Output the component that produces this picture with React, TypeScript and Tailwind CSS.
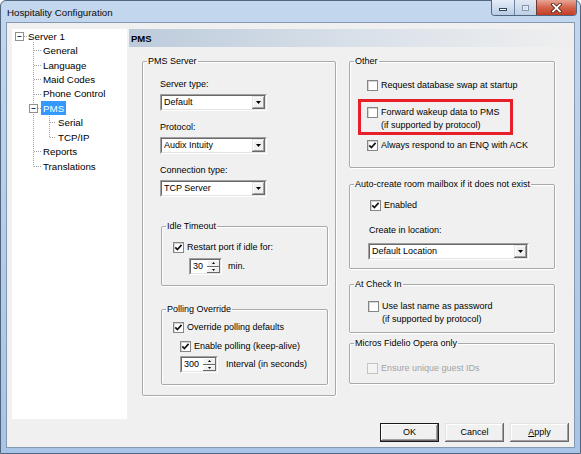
import type { ReactNode } from 'react';

function CheckBox({ checked = false, disabled = false }: { checked?: boolean; disabled?: boolean }) {
    return (
        <span
            className={`mt-px flex h-[11px] w-[11px] shrink-0 items-center justify-center border ${
                disabled ? 'border-[#c4c4c4] bg-[#f4f4f4]' : 'border-[#858585] bg-white shadow-[inset_1px_1px_0_#d4d4d4]'
            }`}
        >
            {checked && (
                <svg width="9" height="9" viewBox="0 0 9 9">
                    <path d="M1.3 4.3 L3.4 6.5 L7.6 1.9" fill="none" stroke="#141414" strokeWidth="1.7" />
                </svg>
            )}
        </span>
    );
}

function CheckRow({
    checked,
    disabled,
    className = '',
    children,
}: {
    checked?: boolean;
    disabled?: boolean;
    className?: string;
    children: ReactNode;
}) {
    return (
        <div className={`flex gap-[3px] ${disabled ? 'text-[#a3a3a3]' : ''} ${className}`}>
            <CheckBox checked={checked} disabled={disabled} />
            <div>{children}</div>
        </div>
    );
}

function GroupBox({ title, className = '', children }: { title: string; className?: string; children: ReactNode }) {
    return (
        <fieldset className={`rounded-[2px] border border-[#a9a9a9] shadow-[inset_1px_1px_0_#ffffff,1px_1px_0_#ffffff] ${className}`}>
            <legend className="ml-[4px] px-[1px]">{title}</legend>
            {children}
        </fieldset>
    );
}

function DownArrow() {
    return (
        <svg width="5" height="3" viewBox="0 0 5 3">
            <path d="M0 0 H5 L2.5 3 Z" fill="#000" />
        </svg>
    );
}

function Combo({ value, className = '' }: { value: string; className?: string }) {
    return (
        <div className={`flex h-[17px] border border-t-[#a0a0a0] border-l-[#a0a0a0] border-r-white border-b-white ${className}`}>
            <div className="flex flex-1 items-center border border-t-[#696969] border-l-[#696969] border-r-[#e3e3e3] border-b-[#e3e3e3] bg-white">
                <span className="flex-1 truncate pl-[2px]">{value}</span>
                <span className="flex h-full w-[13px] items-center justify-center bg-[#f0f0f0] shadow-[inset_-1px_-1px_0_#696969,inset_1px_1px_0_#e3e3e3,inset_-2px_-2px_0_#a0a0a0,inset_2px_2px_0_#ffffff]">
                    <DownArrow />
                </span>
            </div>
        </div>
    );
}

function Spinner({ value, className = '' }: { value: string; className?: string }) {
    return (
        <div className={`flex h-[17px] border border-t-[#a0a0a0] border-l-[#a0a0a0] border-r-white border-b-white ${className}`}>
            <div className="flex flex-1 items-center border border-t-[#696969] border-l-[#696969] border-r-[#e3e3e3] border-b-[#e3e3e3] bg-white">
                <span className="flex-1 pl-[2px]">{value}</span>
                <span className="flex h-full w-[13px] flex-col">
                    <span className="flex flex-1 items-center justify-center bg-[#f0f0f0] shadow-[inset_-1px_-1px_0_#696969,inset_1px_1px_0_#ffffff]">
                        <svg width="3" height="2" viewBox="0 0 3 2">
                            <path d="M0 2 H3 L1.5 0 Z" fill="#000" />
                        </svg>
                    </span>
                    <span className="flex flex-1 items-center justify-center bg-[#f0f0f0] shadow-[inset_-1px_-1px_0_#696969,inset_1px_1px_0_#ffffff]">
                        <svg width="3" height="2" viewBox="0 0 3 2">
                            <path d="M0 0 H3 L1.5 2 Z" fill="#000" />
                        </svg>
                    </span>
                </span>
            </div>
        </div>
    );
}

function DialogButton({ children, isDefault = false }: { children: ReactNode; isDefault?: boolean }) {
    return (
        <div
            className={`flex h-[19px] w-[59px] items-center justify-center bg-[#f0f0f0] ${
                isDefault
                    ? 'border border-[#1a1a1a] shadow-[inset_-1px_-1px_0_#696969,inset_1px_1px_0_#ffffff,inset_-2px_-2px_0_#a0a0a0]'
                    : 'shadow-[inset_-1px_-1px_0_#696969,inset_1px_1px_0_#e3e3e3,inset_-2px_-2px_0_#a0a0a0,inset_2px_2px_0_#ffffff]'
            }`}
        >
            {children}
        </div>
    );
}

const treeRows: { label: string; indent: string; selected?: boolean }[] = [
    { label: 'Server 1', indent: 'pl-[16px]' },
    { label: 'General', indent: 'pl-[31px]' },
    { label: 'Language', indent: 'pl-[31px]' },
    { label: 'Maid Codes', indent: 'pl-[31px]' },
    { label: 'Phone Control', indent: 'pl-[31px]' },
    { label: 'PMS', indent: 'pl-[29px]', selected: true },
    { label: 'Serial', indent: 'pl-[46px]' },
    { label: 'TCP/IP', indent: 'pl-[46px]' },
    { label: 'Reports', indent: 'pl-[31px]' },
    { label: 'Translations', indent: 'pl-[31px]' },
];

function TreeLines() {
    const dots = { stroke: '#a0a0a0', strokeDasharray: '1 1', strokeWidth: 1, fill: 'none' };
    return (
        <svg className="pointer-events-none absolute left-0 top-0" width="115" height="150" viewBox="0 0 115 150">
            <path d="M12 7.5 H16" {...dots} />
            <path d="M21.5 13 V137.5" {...dots} />
            <path d="M22 21.5 H29 M22 36.5 H29 M22 50.5 H29 M22 65.5 H29 M22 122.5 H29 M22 137.5 H29 M26 79.5 H29" {...dots} />
            <path d="M37.5 87 V108.5" {...dots} />
            <path d="M38 93.5 H44 M38 108.5 H44" {...dots} />
            <rect x="3.5" y="3.5" width="8" height="8" fill="#fff" stroke="#919191" />
            <path d="M5.5 7.5 H9.5" stroke="#1d3a5c" />
            <rect x="17.5" y="75.5" width="8" height="8" fill="#fff" stroke="#919191" />
            <path d="M19.5 79.5 H23.5" stroke="#1d3a5c" />
        </svg>
    );
}

function Tree() {
    return (
        <div className="relative h-[390px] w-[115px] shrink-0 bg-white text-[9.75px]">
            <TreeLines />
            {treeRows.map((row) => (
                <div key={row.label} className={`flex h-[14.44px] items-center ${row.indent}`}>
                    {row.selected ? (
                        <span className="flex h-[14px] items-center bg-[#3399ff] px-[2px] text-white">{row.label}</span>
                    ) : (
                        <span>{row.label}</span>
                    )}
                </div>
            ))}
        </div>
    );
}

function TitleBar() {
    return (
        <div className="flex h-[21px] shrink-0 items-start justify-between">
            <span className="pl-[6px] pt-[5px] text-[9.75px] text-[#0b0b0b]">Hospitality Configuration</span>
            <div className="-mt-px mr-[3px] flex h-[16px] overflow-hidden rounded-b-[4px] border border-t-0 border-[#4f6582]">
                <div className="flex w-[22px] items-end justify-center bg-gradient-to-b from-[#e6eef8] to-[#b9cce4] pb-[4px]">
                    <span className="h-[3px] w-[8px] border border-[#34445a] bg-white" />
                </div>
                <div className="flex w-[22px] items-center justify-center border-l border-[#6e84a2] bg-gradient-to-b from-[#e1e9f3] to-[#bfcfe3]">
                    <span className="h-[6px] w-[7px] border border-[#8494aa] shadow-[inset_0_0_0_1px_#e8eef6]" />
                </div>
                <div className="flex w-[40px] items-center justify-center border-l border-[#6b3a33] bg-gradient-to-b from-[#e8a595] via-[#d4644c] to-[#c23c22]">
                    <svg width="11" height="10" viewBox="0 0 11 10">
                        <path d="M2 1.5 L9 8.5 M9 1.5 L2 8.5" stroke="#4a1a12" strokeWidth="3.4" strokeLinecap="square" />
                        <path d="M2 1.5 L9 8.5 M9 1.5 L2 8.5" stroke="#ffffff" strokeWidth="1.8" strokeLinecap="square" />
                    </svg>
                </div>
            </div>
        </div>
    );
}

function PmsServerGroup() {
    return (
        <GroupBox title="PMS Server" className="w-[194px]">
            <div className="pb-[10px] pl-[17px] pt-[10.5px]">
                <div>Server type:</div>
                <Combo value="Default" className="mt-[3px] w-[107px]" />
                <div className="mt-[10px]">Protocol:</div>
                <Combo value="Audix Intuity" className="mt-[3px] w-[107px]" />
                <div className="mt-[10px]">Connection type:</div>
                <Combo value="TCP Server" className="mt-[3px] w-[107px]" />

                <GroupBox title="Idle Timeout" className="ml-px mt-[22.5px] w-[167px]">
                    <div className="pb-[10px] pl-[11px] pt-[8px]">
                        <CheckRow checked>Restart port if idle for:</CheckRow>
                        <div className="mt-[4.5px] flex items-center gap-[6px] pl-[16px]">
                            <Spinner value="30" className="w-[33px]" />
                            <span>min.</span>
                        </div>
                    </div>
                </GroupBox>

                <GroupBox title="Polling Override" className="ml-px mt-[16.5px] w-[167px]">
                    <div className="pb-[11px] pl-[11px] pt-[5px]">
                        <CheckRow checked>Override polling defaults</CheckRow>
                        <CheckRow checked className="ml-[7px] mt-[6px]">
                            Enable polling (keep-alive)
                        </CheckRow>
                        <div className="ml-[7px] mt-[3.5px] flex items-center gap-[8px]">
                            <Spinner value="300" className="w-[38px]" />
                            <span>Interval (in seconds)</span>
                        </div>
                    </div>
                </GroupBox>
            </div>
        </GroupBox>
    );
}

function RightColumn() {
    return (
        <div className="flex w-[206px] flex-col">
            <GroupBox title="Other">
                <div className="pb-[15px] pl-[17px] pt-[11px]">
                    <CheckRow>Request database swap at startup</CheckRow>
                    <div className="-ml-[9px] mt-[7.5px] w-[155px] border-[3px] border-[#e61f29] pl-[6px] pt-[3.5px]">
                        <CheckRow>
                            <div>Forward wakeup data to PMS</div>
                            <div>(if supported by protocol)</div>
                        </CheckRow>
                    </div>
                    <CheckRow checked className="mt-[4px]">
                        Always respond to an ENQ with ACK
                    </CheckRow>
                </div>
            </GroupBox>

            <GroupBox title="Auto-create room mailbox if it does not exist" className="mt-[10px]">
                <div className="pb-[8px] pl-[20px] pt-[8px]">
                    <CheckRow checked>Enabled</CheckRow>
                    <div className="-ml-px mt-[12px]">Create in location:</div>
                    <Combo value="Default Location" className="-ml-[2px] mt-[6px] w-[161px]" />
                </div>
            </GroupBox>

            <GroupBox title="At Check In" className="mt-[9px]">
                <div className="pb-[6px] pl-[18px] pt-[9px]">
                    <CheckRow>
                        <div>Use last name as password</div>
                        <div>(if supported by protocol)</div>
                    </CheckRow>
                </div>
            </GroupBox>

            <GroupBox title="Micros Fidelio Opera only" className="mt-[4px]">
                <div className="pb-[8px] pl-[17px] pt-[12px]">
                    <CheckRow disabled>Ensure unique guest IDs</CheckRow>
                </div>
            </GroupBox>
        </div>
    );
}

export default function App() {
    return (
        <div className="flex h-[454px] w-[581px] flex-col rounded-t-[6px] border border-[#51657e] bg-gradient-to-b from-[#c3d7ee] via-[#b5cde9] to-[#a8c4e6] font-['Liberation_Sans',Arial,sans-serif] text-[9px] leading-[13px] text-black">
            <TitleBar />

            <div className="mx-[5px] mb-[5px] flex flex-1 flex-col border border-[#8498b1] bg-[#f0f0f0] pb-[5px] pl-[5px] pr-[2px] pt-[6px]">
                <div className="flex gap-[2px]">
                    <Tree />

                    <div className="flex flex-1 flex-col">
                        <div className="flex h-[18px] items-center bg-gradient-to-r from-[#bccbdb] via-[#d8e0e9] to-[#efefef] pl-[2px] text-[9.5px] font-bold">
                            PMS
                        </div>
                        <div className="ml-[13px] mt-[7.5px] flex items-start gap-[13px]">
                            <PmsServerGroup />
                            <RightColumn />
                        </div>
                    </div>
                </div>

                <div className="mt-[4px] flex justify-end gap-[6px] pr-[3px]">
                    <DialogButton isDefault>OK</DialogButton>
                    <DialogButton>Cancel</DialogButton>
                    <DialogButton>
                        <span>
                            <span className="underline">A</span>pply
                        </span>
                    </DialogButton>
                </div>
            </div>
        </div>
    );
}
